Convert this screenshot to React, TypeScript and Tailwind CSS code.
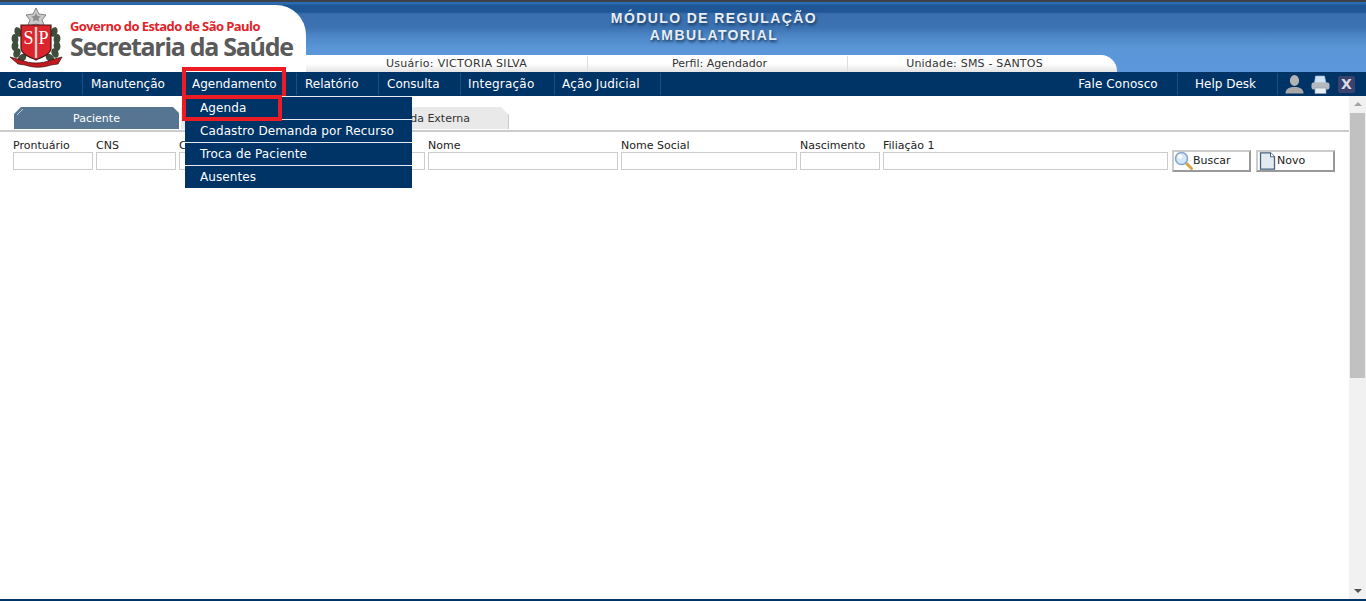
const fields = [
  { label: "Prontuário", width: "w-[80px]" },
  { label: "CNS", width: "w-[80px]" },
  { label: "CPF", width: "w-[80px]" },
  { label: "RG", width: "w-[80px]" },
  { label: "Código", width: "w-[80px]" },
  { label: "Nome", width: "w-[190px]" },
  { label: "Nome Social", width: "w-[176px]" },
  { label: "Nascimento", width: "w-[80px]" },
  { label: "Filiação 1", width: "w-[285px]" },
];

const menu = [
  { label: "Cadastro", width: "w-[83px]", text: "pl-[8px]" },
  { label: "Manutenção", width: "w-[101px]", text: "pl-[8px]" },
  { label: "Agendamento", width: "w-[113px]", text: "pl-[8px]" },
  { label: "Relatório", width: "w-[82px]", text: "pl-[8px]" },
  { label: "Consulta", width: "w-[82px]", text: "pl-[8px]" },
  { label: "Integração", width: "w-[94px]", text: "pl-[7px] tracking-[0.2px]" },
  { label: "Ação Judicial", width: "w-[106px]", text: "pl-[7px] tracking-[0.15px]" },
];

const submenu = ["Agenda", "Cadastro Demanda por Recurso", "Troca de Paciente", "Ausentes"];

const leaves = [
  [9, 24, -20],
  [6, 31, -8],
  [6, 38, 6],
  [8, 45, 24],
  [13, 50, 48],
];

function Brasao() {
  return (
    <svg width="54" height="60" viewBox="0 0 54 60" className="shrink-0">
      {/* ramos */}
      {leaves.map(([x, y, r]) => (
        <g key={y}>
          <ellipse cx={x} cy={y} rx="3.4" ry="5" fill="#3f4d3d" transform={`rotate(${r} ${x} ${y})`} />
          <ellipse cx={54 - x} cy={y} rx="3.4" ry="5" fill="#3f4d3d" transform={`rotate(${-r} ${54 - x} ${y})`} />
        </g>
      ))}
      {/* estrela */}
      <path d="M27 0l3 6 7 1-4 5 3 7-9-3-9 3 3-7-4-5 7-1z" fill="#c9c9c9" stroke="#6a6a6a" strokeWidth="0.8" />
      <path d="M27 5l1.500 3 3 .5-2 2 .5 3-3-1.500-3 1.500 .5-3-2-2 3-.5z" fill="#8d8d8d" />
      {/* escudo */}
      <path d="M12 17h30v23c0 6-9 9-15 12-6-3-15-6-15-12z" fill="#d9252b" stroke="#4d1414" strokeWidth="1.200" />
      <rect x="25.800" y="19" width="2.400" height="31" fill="#f0c9c9" />
      <text x="19.500" y="36" textAnchor="middle" fontSize="18" fontFamily="Liberation Serif, serif" fill="#ffffff">S</text>
      <text x="34.500" y="36" textAnchor="middle" fontSize="18" fontFamily="Liberation Serif, serif" fill="#ffffff">P</text>
      {/* faixa */}
      <path d="M1 49l11 3c9 4 21 4 30 0l11-3-4 7-7 1c-9 3-17 3-26 0l-7-1z" fill="#bf1a20" stroke="#3f1010" strokeWidth="0.7" />
    </svg>
  );
}

function UserIcon() {
  return (
    <svg width="19" height="19" viewBox="0 0 19 19">
      <ellipse cx="9.500" cy="5.500" rx="4.600" ry="5.400" fill="#b3b3b3" />
      <path d="M0.500 18.500c0-4.500 3-5.500 6.500-6.500h5c3.500 1 6.500 2 6.500 6.500z" fill="#a8a8a8" />
    </svg>
  );
}

function PrinterIcon() {
  return (
    <svg width="19" height="19" viewBox="0 0 19 19">
      <path d="M4.500 1h9l1.500 7H3.500z" fill="#cfe2f6" stroke="#9fb6cf" strokeWidth="0.700" />
      <rect x="0.500" y="7.500" width="18" height="7" rx="2" fill="#b5b8bd" />
      <rect x="4" y="13" width="11" height="5.500" fill="#e9eef4" stroke="#8f9fb2" strokeWidth="0.700" />
    </svg>
  );
}

function SearchIcon() {
  return (
    <svg width="20" height="20" viewBox="0 0 20 20" className="shrink-0">
      <path d="M11.500 11.500l6 6" stroke="#d6a544" strokeWidth="3" strokeLinecap="round" />
      <circle cx="7.500" cy="7.500" r="6" fill="#d5e7fb" stroke="#86a6d0" strokeWidth="1.600" />
      <circle cx="6" cy="5.500" r="2.200" fill="#ffffff" />
    </svg>
  );
}

function DocIcon() {
  return (
    <svg width="17" height="18" viewBox="0 0 17 18" className="shrink-0">
      <path d="M1.500 0.800h10l4 4v12.400h-14z" fill="#e3eaf2" stroke="#46627f" strokeWidth="1.300" />
      <path d="M11.500 0.800v4h4" fill="#ffffff" stroke="#46627f" />
    </svg>
  );
}

export default function App() {
  return (
    <div className="relative flex h-[601px] w-[1366px] flex-col overflow-hidden bg-white font-['DejaVu_Sans',sans-serif] text-[11px] text-[#222]">
      <div className="h-[2px] shrink-0 bg-[#3c4148]" />

      {/* Cabeçalho */}
      <header className="flex h-[70px] shrink-0 bg-[linear-gradient(180deg,#2c6bb0_0px,#2c6bb0_2px,#1f5696_3px,#1f5696_10px,#3a6fae_12px,#3c73b3_26px,#4d86c6_34px,#5a96d8_46px,#5b97da_70px)]">
        <div className="mt-[3px] flex h-[67px] w-[306px] shrink-0 items-center gap-[7px] rounded-tr-[30px] bg-white pb-[2px] pl-[9px] pt-[1px]">
          <Brasao />
          <div className="flex flex-col font-['Open_Sans',sans-serif] font-bold">
            <span className="text-[13px] leading-[15px] tracking-[-0.58px] text-[#e2232b]">Governo do Estado de São Paulo</span>
            <span className="text-[25px] leading-[24px] tracking-[-1.3px] text-[#5a5a5a]">Secretaria da Saúde</span>
          </div>
        </div>
        <div className="flex min-w-0 flex-1 flex-col">
          <div className="flex flex-1 flex-col items-center pr-[244px] pt-[8px] font-['Liberation_Sans',sans-serif] text-[14px] font-bold leading-[16.5px] tracking-[1.4px] text-[#e6edf5] [text-shadow:1px_2px_3px_#16365c]">
            <span>MÓDULO DE REGULAÇÃO</span>
            <span>AMBULATORIAL</span>
          </div>
          <div className="flex h-[17px] w-[811px] items-center rounded-tr-[16px] bg-[linear-gradient(180deg,#ffffff_0%,#ffffff_50%,#e4e4e4_100%)] pt-[1px] text-[#333]">
            <div className="flex h-full w-[282px] items-center justify-center border-r border-[#ddd] pl-[20px] tracking-[0.3px]">Usuário: VICTORIA SILVA</div>
            <div className="flex h-full w-[260px] items-center justify-center border-r border-[#ddd] pl-[4px]">Perfil: Agendador</div>
            <div className="flex h-full flex-1 items-center justify-center pr-[16px] tracking-[0.2px]">Unidade: SMS - SANTOS</div>
          </div>
        </div>
      </header>

      {/* Menu principal */}
      <nav className="flex h-[24px] shrink-0 bg-[#003366] text-[12px] text-white">
        {menu.map((item) => (
          <div key={item.label} className={`flex ${item.width} items-center py-[1px]`}>
            <div className={`flex h-full flex-1 items-center whitespace-nowrap border-r border-[#14508c] ${item.text}`}>{item.label}</div>
          </div>
        ))}
        <div className="flex-1" />
        <div className="flex w-[100px] items-center py-[1px]">
          <div className="flex h-full flex-1 items-center justify-center whitespace-nowrap border-r border-[#14508c] pr-[19px] tracking-[0.08px]">Fale Conosco</div>
        </div>
        <div className="flex w-[100px] items-center py-[1px]">
          <div className="flex h-full flex-1 items-center justify-center whitespace-nowrap border-r border-[#14508c] pr-[4px]">Help Desk</div>
        </div>
        <div className="flex w-[88px] items-center gap-[7px] pl-[7px]">
          <UserIcon />
          <PrinterIcon />
          <div className="ml-[1px] flex h-[17px] w-[17px] items-center justify-center rounded-[2px] bg-[#39436e] text-[14px] font-bold leading-none text-[#dcdce4]">X</div>
        </div>
      </nav>

      {/* Conteúdo */}
      <div className="flex min-h-0 flex-1">
        <main className="min-w-0 flex-1">
          <div className="flex h-[36px] items-end gap-[2px] border-b-2 border-[#ccc] pb-[1px] pl-[14px]">
            <div className="relative flex h-[22px] w-[165px] items-center justify-center bg-[#567592] pt-[2px] text-white [clip-path:polygon(7px_0,calc(100%-6px)_0,100%_6px,100%_100%,0_100%,0_7px)]">
              <svg width="12" height="10" viewBox="0 0 12 10" className="absolute left-0 top-0">
                <path d="M3 8l6-6" stroke="#b9c8d6" strokeWidth="1" />
              </svg>
              Paciente
            </div>
            <div className="flex h-[22px] w-[328px] items-center justify-end border-r border-[#ccc] bg-[#e9e9e9] pr-[38px] pt-[2px] text-[#333] [clip-path:polygon(0_0,calc(100%-8px)_0,100%_8px,100%_100%,0_100%)]">Consulta Agendada Externa</div>
          </div>
          <div className="flex items-start gap-[3px] pl-[13px] pt-[6px]">
            {fields.map((field) => (
              <label key={field.label} className={`flex ${field.width} flex-col`}>
                <span className="h-[14px] pt-[1px] leading-[14px]">{field.label}</span>
                <input className="h-[18px] w-full border border-[#ccc] bg-white outline-none" />
              </label>
            ))}
            <button className="ml-[1px] mt-[12px] flex h-[22px] w-[79px] items-center border-2 border-[#ccc] border-b-[#999] border-r-[#999] bg-white text-[11px]">
              <SearchIcon />
              <span className="ml-[-1px]">Buscar</span>
            </button>
            <button className="ml-[2px] mt-[12px] flex h-[22px] w-[79px] items-center gap-[1px] border-2 border-[#ccc] border-b-[#999] border-r-[#999] bg-white pl-[1px] text-[11px]">
              <DocIcon />
              <span>Novo</span>
            </button>
          </div>
        </main>

        {/* Barra de rolagem */}
        <div className="flex w-[17px] shrink-0 flex-col items-center bg-[#f1f1f1]">
          <div className="mt-[6px] h-0 w-0 border-x-[4px] border-b-[4px] border-x-transparent border-b-[#a3a3a3]" />
          <div className="mt-[7px] h-[265px] w-[15px] bg-[#c1c1c1]" />
          <div className="mb-[6px] mt-auto h-0 w-0 border-x-[4px] border-t-[4px] border-x-transparent border-t-[#505050]" />
        </div>
      </div>

      <div className="h-[2px] shrink-0 bg-[#003366]" />

      {/* Destaque no item de menu */}
      <div className="absolute left-[182px] top-[67px] h-[32px] w-[104px] border-4 border-[#ed1c24]" />

      {/* Submenu */}
      <div className="absolute left-[185px] top-[96px] w-[227px] bg-[#003366] text-[12px] tracking-[0.1px] text-white">
        {submenu.map((item) => (
          <div key={item} className="flex h-[23px] items-center border-t border-[#e6ebf1] pl-[15px]">{item}</div>
        ))}
      </div>
      <div className="absolute left-[182px] top-[95px] h-[26px] w-[100px] border-4 border-[#ed1c24]" />
    </div>
  );
}
